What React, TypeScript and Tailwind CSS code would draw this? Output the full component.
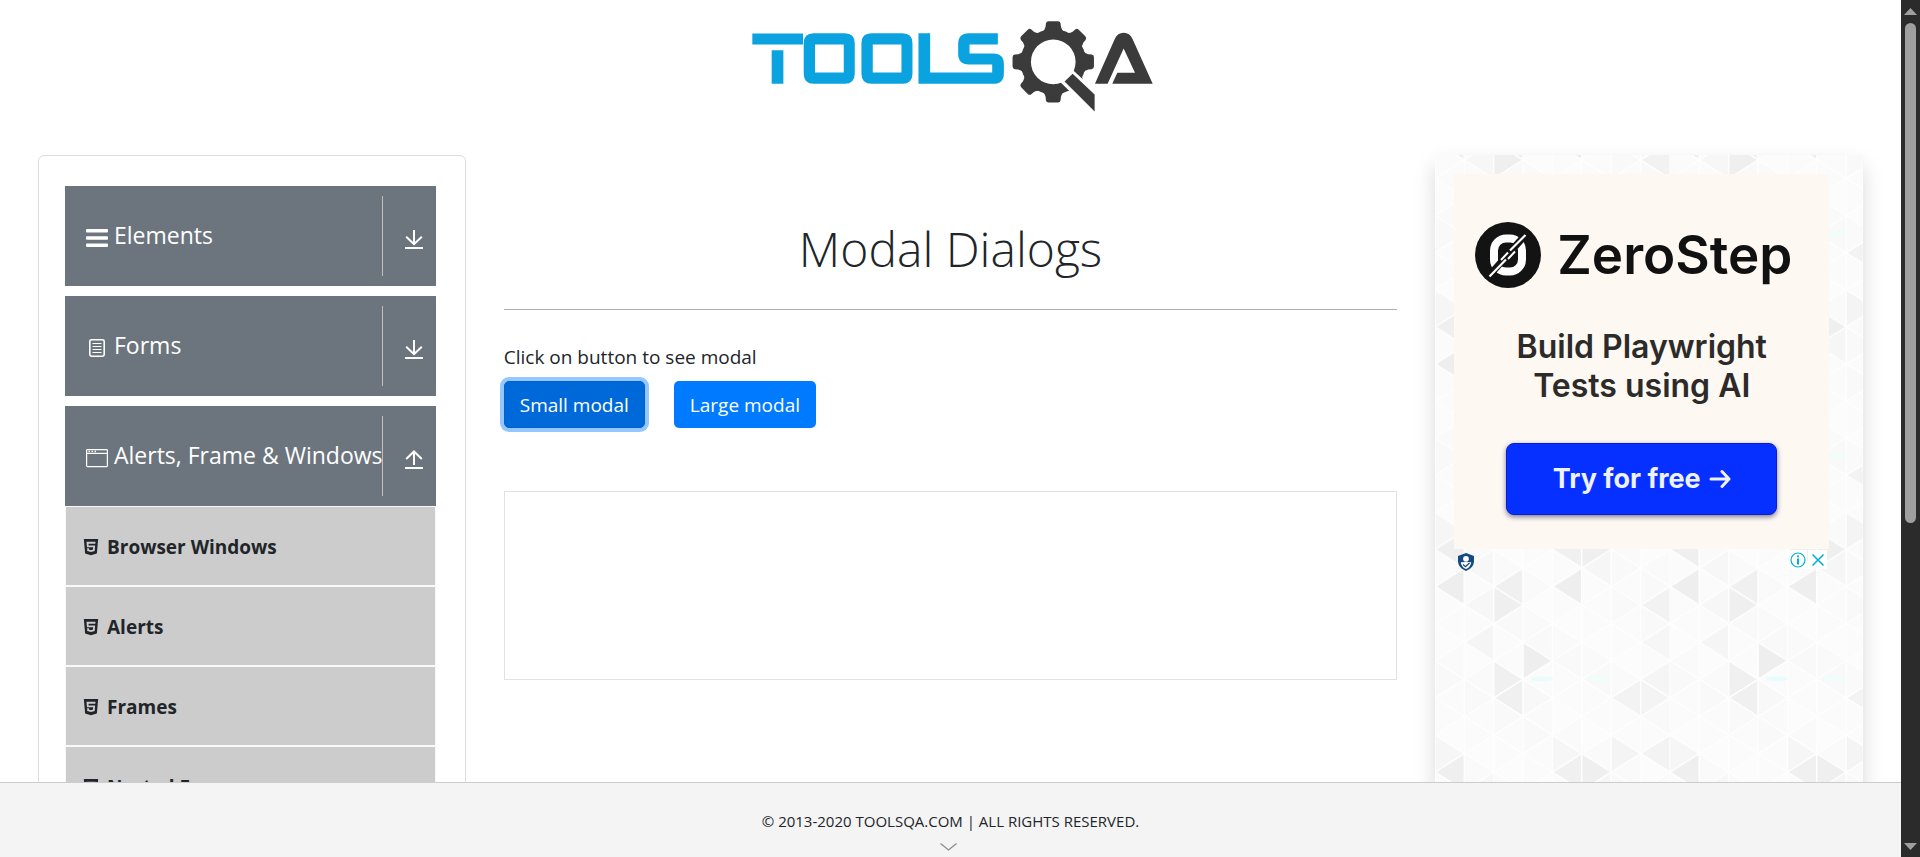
import React from "react";
import { AiFillHtml5 } from "react-icons/ai";

const STRIP = 29.375;
const STEP = 18.55;
const TILE_W = 235;
const TILE_H = 222.6;

const SHADES: Record<string, string> = {
  "0-9": "#efefef", "0-11": "#eeeeee", "0-8": "#f6f6f6",
  "1-0": "#f7f7f7", "1-2": "#f5f5f5", "1-10": "#f7f7f7",
  "2-0": "#efefef", "2-11": "#f0f0f0", "2-4": "#f0f0f0", "2-5": "#f0f0f0",
  "3-3": "#eeeeee", "3-5": "#f8f8f8",
  "4-11": "#eeeeee", "4-9": "#f0f0f0", "4-8": "#f6f6f6",
  "5-9": "#efefef", "5-10": "#f6f6f6",
  "6-5": "#f3f3f3", "6-8": "#f4f4f4",
  "7-0": "#f2f2f2", "7-2": "#f6f6f6", "7-4": "#f5f5f5", "7-5": "#f4f4f4", "7-8": "#f3f3f3",
};
const LIGHT = ["#fbfbfb", "#fafafa", "#fbfbfb", "#f9f9f9", "#fcfcfc"];

function TrianglePattern() {
  const shapes: React.ReactNode[] = [];
  for (let c = 0; c < 8; c++) {
    for (let m = -1; m <= 12; m++) {
      const row = (m + 12) % 12;
      const y = 5 + STEP * m;
      const left = c * STRIP;
      const right = left + STRIP;
      const apexLeft = (c % 2 === 1) === (Math.abs(m) % 2 === 0);
      const apex = apexLeft ? left : right;
      const base = apexLeft ? right : left;
      shapes.push(
        <polygon
          key={`${c}:${m}`}
          points={`${apex},${y} ${base},${y - STEP} ${base},${y + STEP}`}
          fill={SHADES[`${c}-${row}`] ?? LIGHT[(c * 3 + row * 2) % 5]}
          stroke="#fefefe"
          strokeWidth="1.4"
        />
      );
    }
  }
  return (
    <svg className="absolute inset-0 h-full w-full" aria-hidden="true">
      <defs>
        <pattern id="triangles" width={TILE_W} height={TILE_H} patternUnits="userSpaceOnUse">
          {shapes}
          <ellipse cx="107" cy="78.5" rx="11" ry="2.5" fill="#e9fcfc" />
          <ellipse cx="164" cy="78.5" rx="12" ry="3" fill="#f0fdfb" />
        </pattern>
      </defs>
      <rect width="100%" height="100%" fill="url(#triangles)" />
    </svg>
  );
}

function Logo() {
  return (
    <svg viewBox="37 33 1202 272" className="h-[91px] w-[401px]" role="img" aria-label="TOOLSQA">
      <g fill="#0ba2e0" fillRule="evenodd">
        <path d="M38 70H190V103H38ZM96 120H131V221H96Z" />
        <path d="M222 69H315Q345 69 345 99V191Q345 221 315 221H222Q192 221 192 191V99Q192 69 222 69ZM226 103V187H312V103Z" />
        <path d="M395 69H488Q518 69 518 99V191Q518 221 488 221H395Q365 221 365 191V99Q365 69 395 69ZM399 103V187H485V103Z" />
        <path d="M536 69H571V187H757V163H687Q655 163 655 131V101Q655 69 687 69H774V103H689V130H760Q792 130 792 162V189Q792 221 760 221H536Z" />
      </g>
      <g fill="#3b3b3b">
        <circle cx="940" cy="155" r="98" />
        {[0, 45, 90, 135, 180, 225, 270, 315].map((a) => (
          <path
            key={a}
            transform={`rotate(${a} 940 155)`}
            d="M906 66Q915 60 917 50L918 40Q919 33 926 33H954Q961 33 962 40L963 50Q965 60 974 66Z"
          />
        ))}
      </g>
      <circle cx="940" cy="155" r="67" fill="#ffffff" />
      <path d="M973 215L998 191L1064 252V304Z" fill="#ffffff" stroke="#ffffff" strokeWidth="18" />
      <path d="M974 214L998 191L1064 253V304Z" fill="#3b3b3b" />
      <path
        d="M1065 221L1124 87Q1133 68 1151 68Q1169 68 1178 87L1238 221H1117L1132 188H1185L1151 115L1103 221Z"
        fill="#3b3b3b"
      />
    </svg>
  );
}

function MenuIcon() {
  return (
    <svg viewBox="0 0 22 22" className="size-[22px] shrink-0" fill="#fff" aria-hidden="true">
      <rect y="2" width="22" height="3.4" rx="1" />
      <rect y="9.300" width="22" height="3.400" rx="1" />
      <rect y="16.600" width="22" height="3.400" rx="1" />
    </svg>
  );
}

function FormIcon() {
  return (
    <svg viewBox="0 0 22 22" className="size-[22px] shrink-0" fill="none" stroke="#fff" aria-hidden="true">
      <rect x="3.8" y="2.8" width="14.4" height="16.4" rx="1.6" strokeWidth="1.6" />
      <path d="M6.5 6.5H15.5M6.5 9.5H15.5M6.5 12.5H15.5M6.5 15.5H15.5" strokeWidth="1" />
    </svg>
  );
}

function WindowIcon() {
  return (
    <svg viewBox="0 0 22 22" className="size-[22px] shrink-0" fill="none" stroke="#fff" aria-hidden="true">
      <rect x="0.6" y="2.6" width="20.8" height="17" rx="0.8" strokeWidth="1.2" />
      <path d="M1 6.4H21" strokeWidth="1.2" />
      <path d="M2.5 4.5H4M5.5 4.5H7M8.5 4.5H10" strokeWidth="1.4" />
    </svg>
  );
}

function ArrowIcon({ up = false }: { up?: boolean }) {
  return (
    <svg viewBox="0 0 18 20" className="h-[20px] w-[18px]" fill="none" stroke="#fff" strokeWidth="2" aria-hidden="true">
      {up ? <path d="M9 15V1.5M1.2 9L9 1.5L16.8 9" /> : <path d="M9 0V14M1.2 6.8L9 14.2L16.8 6.8" />}
      <path d="M0 18H18" />
    </svg>
  );
}

function Group({ icon, label, open = false }: { icon: React.ReactNode; label: string; open?: boolean }) {
  return (
    <button type="button" aria-expanded={open} className="flex h-[100px] w-full items-center bg-[#6c757d] text-left text-white">
      <span className="flex min-w-0 flex-1 items-center gap-[6px] pl-[21px]">
        <span className="pt-1">{icon}</span>
        <span className="pb-[2px] text-[23px] leading-[30px] whitespace-nowrap">{label}</span>
      </span>
      <span className="flex h-20 w-[54px] shrink-0 items-center border-l border-[#bfbfbf] pt-2 pl-[22px]">
        <ArrowIcon up={open} />
      </span>
    </button>
  );
}

const ITEMS = ["Browser Windows", "Alerts", "Frames", "Nested Frames", "Modal Dialogs"];

function Sidebar() {
  return (
    <nav className="rounded-md border border-[#dcdcdc] pt-[30px] pr-[29px] pl-[26px]">
      <div className="flex flex-col gap-[10px]">
        <Group icon={<MenuIcon />} label="Elements" />
        <Group icon={<FormIcon />} label="Forms" />
        <Group icon={<WindowIcon />} label="Alerts, Frame & Windows" open />
      </div>
      <ul>
        {ITEMS.map((item) => (
          <li key={item} className="border border-[#f8f8f8] bg-[#cccccc]">
            <a href="#" className="flex h-[78px] items-center gap-[6px] pt-[2px] pl-[15px] text-[19px] leading-[30px] font-bold text-[#212529]">
              <AiFillHtml5 className="size-5" aria-hidden="true" />
              {item}
            </a>
          </li>
        ))}
      </ul>
    </nav>
  );
}

function Dialogs() {
  return (
    <main className="col-span-2">
      <h1 className="mt-16 text-center text-[48px] leading-[60px] font-light">Modal Dialogs</h1>
      <hr className="mt-[30px] border-t border-[#adadad]" />
      <p className="mt-8 text-[19px] leading-[30px]">Click on button to see modal</p>
      <div className="mt-[9px] flex gap-[29px] text-[19px] leading-[30px] text-white">
        <button type="button" className="h-[47px] rounded-[5px] border border-[#0062cc] bg-[#0069d9] px-[15px] ring-4 ring-[#94c6ff]">
          Small modal
        </button>
        <button type="button" className="h-[47px] rounded-[5px] bg-[#007bff] px-4">
          Large modal
        </button>
      </div>
      <div className="mt-[63px] h-[189px] border border-[#e2e2e2]" />
    </main>
  );
}

function Advert() {
  return (
    <aside className="relative min-h-[720px] shadow-[0_10px_20px_rgba(0,0,0,0.15)]">
      <TrianglePattern />
      <div className="relative pt-[19px] pl-[19px]">
        <a
          href="#"
          className="flex h-[375px] w-[375px] flex-col items-center bg-[#fdf8f2] pt-12"
          style={{ fontFamily: "Inter, sans-serif" }}
        >
          <span className="flex w-full items-center gap-4 pl-[21px]">
            <svg viewBox="0 0 66 66" className="size-[66px] shrink-0" aria-hidden="true">
              <circle cx="33" cy="33" r="33" fill="#131313" />
              <rect x="19" y="16.500" width="28" height="33" rx="12" fill="none" stroke="#fff" strokeWidth="8" />
              <path d="M13 55L52 11" stroke="#131313" strokeWidth="7" />
              <path d="M14.5 54.5L31 37.5M35 28.5L50.5 13" stroke="#fff" strokeWidth="2.2" />
              <path d="M26 38L33 30.5M33 37L40 29.5" stroke="#fff" strokeWidth="2" />
            </svg>
            <span className="text-[53px] leading-[66px] font-semibold text-[#111111]">ZeroStep</span>
          </span>
          <span className="mt-[39px] text-center text-[32px] leading-[39px] font-semibold text-[#2c2b2a]">
            Build Playwright
            <br />
            Tests using AI
          </span>
          <span className="mt-[38px] flex h-[72px] w-[271px] items-center justify-center gap-2 rounded-lg border border-[#0a1cd0] bg-[#0530ff] text-[27px] leading-8 font-bold text-[#eef2ff] shadow-[0_2px_5px_rgba(40,40,90,0.6)]">
            Try for free
            <svg viewBox="0 0 22 20" className="h-5 w-[22px]" fill="none" stroke="#eef2ff" strokeWidth="3" strokeLinecap="round" strokeLinejoin="round" aria-hidden="true">
              <path d="M2 10H20M13 2.5L20 10L13 17.5" />
            </svg>
          </span>
        </a>
        <div className="flex w-[375px] justify-between pr-[2px]">
          <svg viewBox="0 0 16 18" className="mt-1 ml-1 h-[18px] w-4" aria-hidden="true">
            <path d="M8 0L16 3V8.500Q15.500 15 8 18Q0.500 15 0 8.500V3Z" fill="#154a82" />
            <circle cx="8" cy="5.800" r="2.900" fill="#fff" />
            <path d="M2.800 9.200Q5.500 9 8 9Q10.500 9 13.200 9.200Q12.800 14 8 16Q3.200 14 2.800 9.200Z" fill="#fff" />
            <path d="M5 11.500L7.500 13.700L11.500 10" fill="none" stroke="#154a82" strokeWidth="1.300" />
          </svg>
          <div className="mt-px flex gap-px">
            <button type="button" aria-label="Ad information" className="flex size-[19px] items-center justify-center bg-white">
              <svg viewBox="0 0 16 16" className="size-4" fill="none" stroke="#00aecd" aria-hidden="true">
                <circle cx="8" cy="8" r="7" strokeWidth="1.200" />
                <path d="M8 6.500V12.500M8 3.500V5.300" strokeWidth="2" />
              </svg>
            </button>
            <button type="button" aria-label="Close ad" className="flex size-[19px] items-center justify-center bg-white">
              <svg viewBox="0 0 16 16" className="size-4" stroke="#00aecd" strokeWidth="1.500" aria-hidden="true">
                <path d="M2.500 2.500L13.500 13.500M13.500 2.500L2.500 13.500" />
              </svg>
            </button>
          </div>
        </div>
      </div>
    </aside>
  );
}

function ScrollRail() {
  return (
    <div className="flex w-[19px] shrink-0 flex-col items-center bg-[#2b2b2b] pt-2 pb-[7px]" aria-hidden="true">
      <svg viewBox="0 0 13 7" className="h-[7px] w-[13px]" fill="#9f9f9f">
        <path d="M6.500 0L13 7H0Z" />
      </svg>
      <div className="mt-2 flex w-[11px] flex-1 flex-col">
        <div className="h-[61%] rounded-full bg-[#9f9f9f]" />
      </div>
      <svg viewBox="0 0 13 7" className="h-[7px] w-[13px]" fill="#9f9f9f">
        <path d="M0 0H13L6.500 7Z" />
      </svg>
    </div>
  );
}

export default function App() {
  return (
    <div
      className="flex h-screen overflow-hidden bg-white text-[#212529]"
      style={{ fontFamily: '"Open Sans", "Noto Sans", sans-serif' }}
    >
      <div className="flex min-w-0 flex-1 flex-col">
        <div className="min-h-0 flex-1 overflow-hidden">
          <header className="flex h-[155px] justify-center pt-[21px] pl-1">
            <a href="#" className="h-[91px]">
              <Logo />
            </a>
          </header>
          <div className="grid grid-cols-4 gap-[38px] px-[38px]">
            <Sidebar />
            <Dialogs />
            <Advert />
          </div>
        </div>
        <footer className="flex h-[75px] shrink-0 flex-col items-center border-t border-[#cccccc] bg-[#f4f4f4] pt-[26px]">
          <span className="text-[15px] leading-6">© 2013-2020 TOOLSQA.COM | ALL RIGHTS RESERVED.</span>
          <svg viewBox="0 0 17 8" className="mt-[10px] mr-1 h-2 w-[17px]" fill="none" stroke="#8c8c8c" strokeWidth="1.300" aria-hidden="true">
            <path d="M0.500 0.500L8.500 7L16.500 0.500" />
          </svg>
        </footer>
      </div>
      <ScrollRail />
    </div>
  );
}
